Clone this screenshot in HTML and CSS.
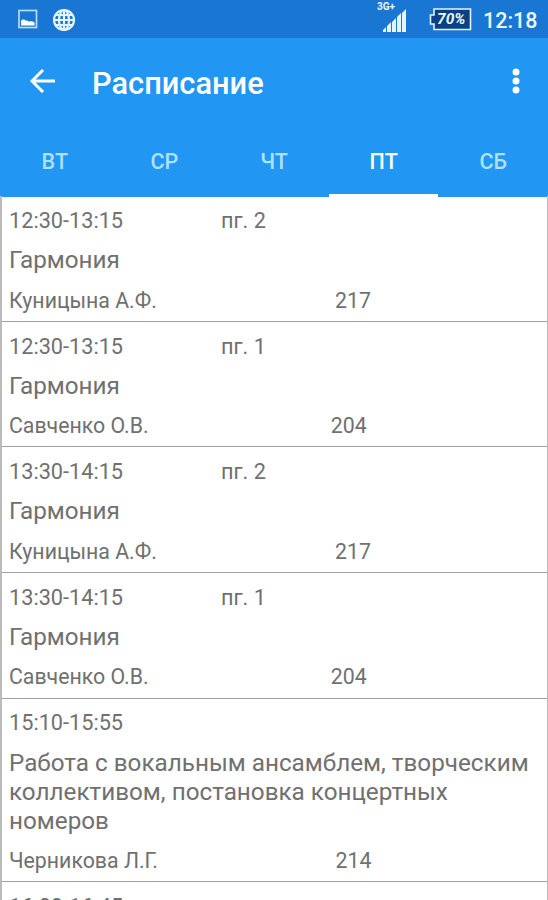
FILE: index.html
```html
<!DOCTYPE html>
<html lang="ru">
<head>
  <meta charset="UTF-8" />
  <title>Расписание</title>
  <link rel="stylesheet" href="styles.css">
</head>
<body>
  <!-- Status bar -->
  <div class="status-bar">
    <svg class="status-image" width="20" height="20" viewBox="0 0 20 20">
      <rect x="1" y="1.500" width="17.500" height="17" fill="none" stroke="#b5dcf8" stroke-width="1.700" />
      <path d="M3 16.500v-4.500c1-2 4-2 5 0 1-.8 2-.5 2.500.8 2-.8 4-.5 6 .7v3z" fill="#fff" />
    </svg>
    <svg class="status-globe" width="24" height="24" viewBox="0 0 24 24">
      <circle cx="12" cy="12" r="10" />
      <ellipse cx="12" cy="12" rx="5" ry="10" />
      <path d="M12 2v20M2 12h20M4 7h16M4 17h16" />
    </svg>
    <div class="signal">
      <span>3G+</span>
      <svg width="24" height="23" viewBox="0 0 24 23">
        <path d="M0 23v-2l3-3v5zM4 23v-6l4-4v10zM9 23V13l4-4v14zM14 23V8l4-4v19zM19 23V4l4-4v23z" fill="#e2f5ff" />
      </svg>
    </div>
    <div class="battery">
      <svg width="43" height="23" viewBox="0 0 43 23">
        <path d="M5 1h36.500v20.500H5V16H1.500V7H5z" fill="#0c4084" stroke="#e2f5ff" stroke-width="1.600" />
      </svg>
      <span>70%</span>
    </div>
    <span class="clock">12:18</span>
  </div>

  <header class="app-bar">
    <svg class="back" width="26" height="24" viewBox="0 0 26 24">
      <path d="M25 12H2M13 1L2 12l11 11" />
    </svg>
    <h1>Расписание</h1>
    <svg class="more" width="8" height="28" viewBox="0 0 8 28">
      <circle cx="4" cy="5" r="3.500" />
      <circle cx="4" cy="14" r="3.500" />
      <circle cx="4" cy="23" r="3.500" />
    </svg>
  </header>

  <nav class="tabs">
    <div class="tab">ВТ</div>
    <div class="tab">СР</div>
    <div class="tab">ЧТ</div>
    <div class="tab active">ПТ</div>
    <div class="tab">СБ</div>
  </nav>

  <main class="lessons">
    <div class="lesson">
      <div class="when"><span class="time">12:30-13:15</span><span>пг. 2</span></div>
      <div class="subject">Гармония</div>
      <div class="who"><span class="teacher">Куницына А.Ф.</span><span class="room">217</span></div>
    </div>
    <div class="lesson">
      <div class="when"><span class="time">12:30-13:15</span><span>пг. 1</span></div>
      <div class="subject">Гармония</div>
      <div class="who"><span class="teacher">Савченко О.В.</span><span class="room">204</span></div>
    </div>
    <div class="lesson">
      <div class="when"><span class="time">13:30-14:15</span><span>пг. 2</span></div>
      <div class="subject">Гармония</div>
      <div class="who"><span class="teacher">Куницына А.Ф.</span><span class="room">217</span></div>
    </div>
    <div class="lesson">
      <div class="when"><span class="time">13:30-14:15</span><span>пг. 1</span></div>
      <div class="subject">Гармония</div>
      <div class="who"><span class="teacher">Савченко О.В.</span><span class="room">204</span></div>
    </div>
    <div class="lesson">
      <div class="when"><span class="time">15:10-15:55</span></div>
      <div class="subject">Работа с вокальным ансамблем, творческим коллективом, постановка концертных номеров</div>
      <div class="who"><span class="teacher">Черникова Л.Г.</span><span class="room">214</span></div>
    </div>
    <div class="lesson">
      <div class="when"><span class="time">16:00-16:45</span></div>
    </div>
  </main>
</body>
</html>
```
FILE: styles.css
```css
* {
  box-sizing: border-box;
}
body {
  margin: 0;
  height: 900px;
  overflow: hidden;
  display: flex;
  flex-direction: column;
  font-family: Roboto, sans-serif;
  color: #707070;
  background-color: #fff;
}

/* Status bar */
.status-bar {
  flex: none;
  display: flex;
  height: 38px;
  background-color: #1976d2;
  color: #e8f7ff;
}
.status-image {
  margin: 9px 0 0 18px;
}
.status-globe {
  margin: 8px 0 0 14px;
  fill: none;
  stroke: #e2f5ff;
  stroke-width: 2.2;
}
.signal {
  display: flex;
  flex-direction: column;
  margin: 2px 0 0 auto;
  width: 30px;
  font-size: 10px;
  font-weight: 700;
  line-height: 10px;
}
.signal svg {
  margin: -3px 0 0 6px;
}
.battery {
  display: grid;
  width: 43px;
  height: 23px;
  margin: 8px 0 0 22px;
}
.battery svg,
.battery span {
  grid-area: 1 / 1;
}
.battery span {
  padding-left: 8px;
  font-size: 15.5px;
  font-weight: 700;
  font-style: italic;
  line-height: 23px;
}
.clock {
  width: 65px;
  margin-left: 11px;
  font-size: 21.5px;
  font-weight: 500;
  line-height: 41px;
}

/* App bar */
.app-bar {
  flex: none;
  display: flex;
  align-items: center;
  height: 87px;
  padding: 0 28px 0 30px;
  background-color: #2196f3;
}
.app-bar h1 {
  margin: 3px auto 0 36px;
  color: #fff;
  font-size: 30.8px;
  font-weight: 500;
}
.back {
  margin-top: -2px;
  fill: none;
  stroke: #fff;
  stroke-width: 3;
}
.more {
  margin-top: -1px;
  fill: #fff;
}

/* Day tabs */
.tabs {
  flex: none;
  display: flex;
  height: 72px;
  background-color: #2196f3;
}
.tab {
  flex: 1;
  padding-top: 1px;
  border-bottom: 3px solid transparent;
  color: #b0e1fc;
  font-size: 21.5px;
  font-weight: 500;
  line-height: 72px;
  text-align: center;
}
.tab.active {
  color: #fff;
  border-color: #fff;
}

/* Lessons */
.lessons {
  flex: 1;
  margin-top: -0.8px;
  border-left: 2px solid #bbb;
  border-right: 1px solid #bbb;
}
.lesson {
  padding: 11.8px 0 7.2px 7px;
  border-bottom: 1px solid #a0a0a0;
  font-size: 21.7px;
}
.when,
.who {
  display: flex;
  line-height: 26px;
}
.time {
  width: 212px;
}
.subject {
  margin: 12.3px 0;
  padding-right: 8px;
  font-size: 24.25px;
  line-height: 29px;
}
.who {
  font-size: 21.3px;
}
.teacher {
  flex: 1 1 auto;
  padding-right: 2px;
}
.room {
  flex: 1 1 auto;
}
```
